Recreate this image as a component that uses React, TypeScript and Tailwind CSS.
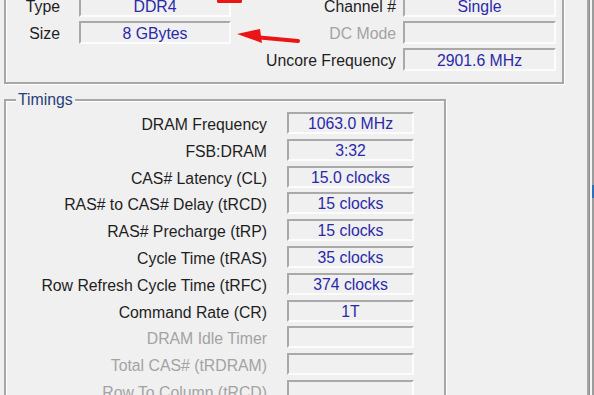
import React from "react";

const timings = [
  { label: "DRAM Frequency", value: "1063.0 MHz" },
  { label: "FSB:DRAM", value: "3:32" },
  { label: "CAS# Latency (CL)", value: "15.0 clocks" },
  { label: "RAS# to CAS# Delay (tRCD)", value: "15 clocks" },
  { label: "RAS# Precharge (tRP)", value: "15 clocks" },
  { label: "Cycle Time (tRAS)", value: "35 clocks" },
  { label: "Row Refresh Cycle Time (tRFC)", value: "374 clocks" },
  { label: "Command Rate (CR)", value: "1T" },
  { label: "DRAM Idle Timer", value: "", disabled: true },
  { label: "Total CAS# (tRDRAM)", value: "", disabled: true },
  { label: "Row To Column (tRCD)", value: "", disabled: true },
];

function Field({ value = "", className = "" }: { value?: string; className?: string }) {
  return (
    <div
      className={`flex items-center justify-center pt-[2px] border-2 border-t-[#a9a9a9] border-l-[#a9a9a9] border-r-[#fcfcfc] border-b-[#fcfcfc] text-[#2a2aa8] leading-none ${className}`}
    >
      {value}
    </div>
  );
}

function Label({ text, disabled, className = "" }: { text: string; disabled?: boolean; className?: string }) {
  return (
    <div
      className={`text-right leading-none pt-[3px] whitespace-nowrap ${
        disabled ? "text-[#a3a3a3]" : "text-[#1e1e1e]"
      } ${className}`}
    >
      {text}
    </div>
  );
}

export default function App() {
  return (
    <div
      className="relative flex w-[594px] h-[395px] overflow-hidden bg-[#f0f0f0] text-[15.8px]"
      style={{ fontFamily: '"Liberation Sans", Arial, sans-serif' }}
    >
      <div className="flex flex-col w-[587px]">
        {/* memory general box (top cut off) */}
        <div className="ml-[4px] -mt-[40px] w-[560px] h-[124px] shrink-0 border-2 border-[#a7a7a7] shadow-[1px_1px_0_#fff,inset_1px_1px_0_#fff] pt-[32px]">
          <div className="flex items-center h-[23px] mb-[4px]">
            <Label text="Type" className="w-[54px]" />
            <Field value="DDR4" className="ml-[19px] w-[152px] h-[23px]" />
            <Label text="Channel #" className="w-[165px]" />
            <Field value="Single" className="ml-[7px] w-[153px] h-[23px]" />
          </div>
          <div className="flex items-center h-[23px] mb-[4px]">
            <Label text="Size" className="w-[54px]" />
            <Field value="8 GBytes" className="ml-[19px] w-[152px] h-[23px]" />
            <Label text="DC Mode" disabled className="w-[165px]" />
            <Field className="ml-[7px] w-[153px] h-[23px]" />
          </div>
          <div className="flex items-center h-[23px]">
            <div className="w-[225px]" />
            <Label text="Uncore Frequency" className="w-[165px]" />
            <Field value="2901.6 MHz" className="ml-[7px] w-[153px] h-[23px]" />
          </div>
        </div>

        {/* timings box */}
        <div className="ml-[4px] mt-[15px] w-[442px] h-[400px] shrink-0 flex flex-col border-2 border-[#a7a7a7] shadow-[1px_1px_0_#fff,inset_1px_1px_0_#fff]">
          <span className="self-start -mt-[10px] ml-[10px] px-[2px] bg-[#f0f0f0] leading-[18px] text-[#26407a]">
            Timings
          </span>
          <div className="mt-[3px] flex flex-col">
            {timings.map((t) => (
              <div key={t.label} className="flex items-start h-[26.8px]">
                <Label text={t.label} disabled={t.disabled} className="w-[261px] pt-[5px]" />
                <Field value={t.value} className="ml-[20px] w-[127px] h-[22px]" />
              </div>
            ))}
          </div>
        </div>
      </div>

      {/* window edge on the right */}
      <div className="flex w-[7px] h-full">
        <div className="w-[3px] h-full bg-[#a5a5a5] border-r border-[#8e8e8e]" />
        <div className="w-[2px] h-full bg-[#f4f4f4]" />
        <div className="w-[2px] h-full flex flex-col bg-[#9c9c9c]">
          <div className="mt-[185px] h-[13px] bg-[#2f6fb8]" />
        </div>
      </div>

      {/* red annotation arrows */}
      <svg className="absolute inset-0 pointer-events-none" width="594" height="395">
        <rect x="217" y="-2" width="25" height="5" rx="1.5" fill="#ec1515" />
        <line x1="254" y1="37" x2="298" y2="41" stroke="#ec1515" strokeWidth="4" strokeLinecap="round" />
        <polygon points="237,34 260,29 262,43" fill="#ec1515" />
      </svg>
    </div>
  );
}
